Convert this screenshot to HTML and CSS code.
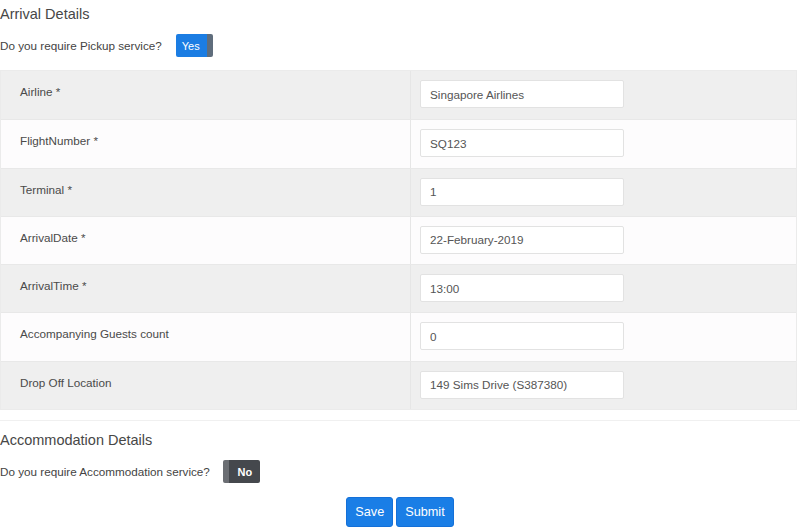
FILE: index.html
```html
<!DOCTYPE html>
<html lang="en">
<head>
    <meta charset="UTF-8">
    <title>Booking Details</title>
    <link rel="stylesheet" href="styles.css">
</head>
<body>
    <div class="booking-form">
        <h2 class="section-title">Arrival Details</h2>
        <div class="question">
            <span>Do you require Pickup service?</span>
            <button class="toggle toggle-on">Yes</button>
        </div>

        <div class="details-table">
            <div class="detail-row">
                <div class="detail-label">Airline *</div>
                <div class="detail-value"><input class="field" type="text" value="Singapore Airlines"></div>
            </div>
            <div class="detail-row">
                <div class="detail-label">FlightNumber *</div>
                <div class="detail-value"><input class="field" type="text" value="SQ123"></div>
            </div>
            <div class="detail-row">
                <div class="detail-label">Terminal *</div>
                <div class="detail-value"><input class="field" type="text" value="1"></div>
            </div>
            <div class="detail-row">
                <div class="detail-label">ArrivalDate *</div>
                <div class="detail-value"><input class="field" type="text" value="22-February-2019"></div>
            </div>
            <div class="detail-row">
                <div class="detail-label">ArrivalTime *</div>
                <div class="detail-value"><input class="field" type="text" value="13:00"></div>
            </div>
            <div class="detail-row">
                <div class="detail-label">Accompanying Guests count</div>
                <div class="detail-value"><input class="field" type="text" value="0"></div>
            </div>
            <div class="detail-row">
                <div class="detail-label">Drop Off Location</div>
                <div class="detail-value"><input class="field" type="text" value="149 Sims Drive (S387380)"></div>
            </div>
        </div>

        <hr class="divider">

        <h2 class="section-title">Accommodation Details</h2>
        <div class="question">
            <span>Do you require Accommodation service?</span>
            <button class="toggle toggle-off">No</button>
        </div>

        <div class="form-actions">
            <button class="btn">Save</button>
            <button class="btn">Submit</button>
        </div>
    </div>
</body>
</html>
```

FILE: styles.css
```css
* {
    margin: 0;
    padding: 0;
    box-sizing: border-box;
}

body {
    font-family: 'Liberation Sans', Arial, sans-serif;
    background: #fff;
    color: #444;
}

.booking-form {
    width: 800px;
}

.section-title {
    font-size: 14.5px;
    font-weight: normal;
    color: #474747;
    line-height: 18px;
    padding-top: 5px;
}

.question {
    display: flex;
    align-items: center;
    height: 23px;
    margin-top: 11px;
    font-size: 11.7px;
    color: #444;
}

.toggle {
    height: 23px;
    width: 37px;
    border: none;
    border-radius: 2px;
    color: #fff;
    font-family: inherit;
    font-size: 11px;
    cursor: pointer;
}

.toggle-on {
    margin-left: 14px;
    background: linear-gradient(to right, #1b7de3 0, #1b7de3 31px, #5f6d7c 31px);
    padding-right: 7px;
}

.toggle-off {
    margin-left: 13px;
    background: linear-gradient(to right, #6b6e73 0, #6b6e73 6px, #45484d 6px);
    padding-left: 7px;
    font-weight: bold;
}

.details-table {
    width: 797px;
    margin-top: 13px;
    border: 1px solid #ebebeb;
}

.detail-row {
    display: grid;
    grid-template-columns: 409px 1fr;
    height: 48.3px;
    border-top: 1px solid #e8e8e8;
}

.detail-row:first-child {
    border-top: none;
}

.detail-row:nth-child(odd) {
    background: #efefef;
}

.detail-row:nth-child(even) {
    background: #fdfcfd;
}

.detail-label {
    padding: 14px 0 0 19px;
    font-size: 11.7px;
    color: #4a4a4a;
}

.detail-value {
    border-left: 1px solid #e6e6e6;
    padding: 9px 0 0 9px;
}

.field {
    width: 204px;
    height: 28px;
    border: 1px solid #e2e2e2;
    border-radius: 2px;
    background: #fff;
    padding: 0 9px;
    font-family: inherit;
    font-size: 11.7px;
    color: #555;
}

.divider {
    border: none;
    border-top: 1px solid #f0f0f0;
    margin-top: 10px;
    margin-bottom: 5px;
}

.form-actions {
    display: flex;
    justify-content: center;
    gap: 3px;
    margin-top: 14px;
}

.btn {
    height: 30px;
    padding: 0 8px;
    min-width: 46px;
    border: 1px solid #1470d8;
    border-radius: 3px;
    background: #1a7ee6;
    color: #fff;
    font-family: inherit;
    font-size: 12.7px;
    cursor: pointer;
}
```
